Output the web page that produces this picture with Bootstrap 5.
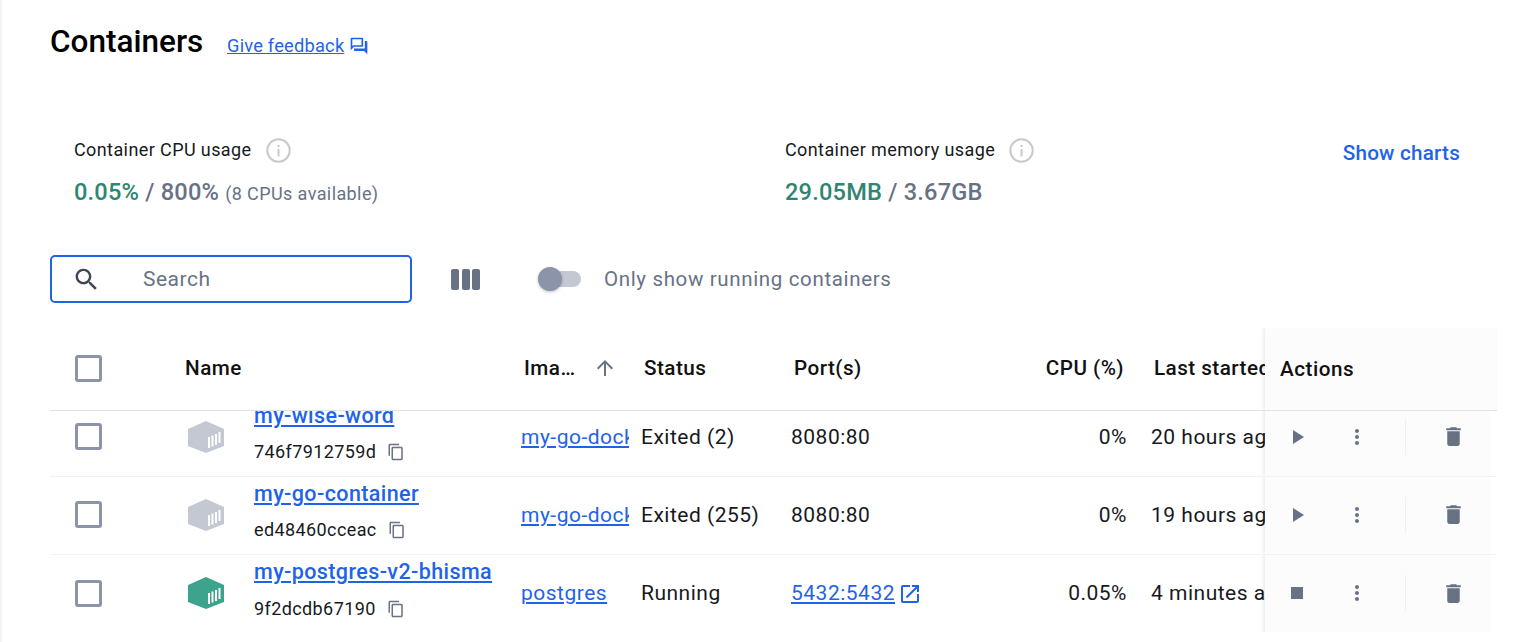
<!DOCTYPE html>
<html lang="en">
<head>
<meta charset="utf-8">
<title>Containers</title>
<link href="https://cdn.jsdelivr.net/npm/bootstrap@5.3.0/dist/css/bootstrap.min.css" rel="stylesheet">
<style>
:root{--ink:#17191d;--slate:#677285;--blue:#1f63e8;--mint:#2f8571;}
html,body{height:100%;overflow:hidden;background:#fff;}
body{font-family:Roboto,"Liberation Sans",sans-serif;color:var(--ink);border-left:2px solid #f2f3f4;font-size:21px;letter-spacing:.5px;line-height:1.2;}
a{color:var(--blue);}
svg{display:block;flex:none;fill:currentColor;}
.shell{padding:0 26px 0 48px;height:642px;}
.top-head{height:82px;padding-top:24px;align-items:flex-start;}
.top-head h1{font-size:31.5px;font-weight:500;color:#000;letter-spacing:0;margin:0;line-height:36px;width:177px;}
.fb-link{font-size:18.3px;letter-spacing:.2px;line-height:22px;margin-top:11px;}
.fb-ico{color:var(--blue);margin:12px 0 0 5px;}
.stats{height:173px;padding:56px 37px 0 24px;}
.stat-one{width:711px;}
.stat-lab{font-size:18px;line-height:24px;height:24px;letter-spacing:.4px;}
.info-ico{color:#c9c9c9;margin-left:14px;}
.stat-val{font-size:23.6px;font-weight:500;line-height:28px;margin-top:16px;color:var(--slate);letter-spacing:.2px;}
.stat-val b{font-weight:500;color:var(--mint);}
.stat-val small{font-size:18px;font-weight:400;letter-spacing:.4px;}
.show-link{font-size:20.7px;font-weight:500;text-decoration:none;letter-spacing:.2px;margin-top:3px;}
.tool-row{height:48px;}
.find-box{width:362px;height:48px;border:2px solid var(--blue);border-radius:5px;padding-left:22px;color:#3c4654;}
.find-box .form-control{border:0;box-shadow:none;padding:2px 0 0 42px;font-size:21px;letter-spacing:.5px;color:var(--slate);background:transparent;font-family:inherit;}
.find-box .form-control::placeholder{color:var(--slate);opacity:1;}
.find-box svg{margin-left:-2px;}
.col-bars{margin-left:39px;gap:2.5px;}
.col-bars i{display:block;width:8px;height:21px;border-radius:2px;background:var(--slate);}
.tgl{width:44px;height:25px;margin-left:58px;}
.tgl-track{width:43px;height:16px;border-radius:8px;background:#c4c8d4;}
.tgl-knob{width:24px;height:24px;border-radius:50%;background:#8b94a8;box-shadow:0 1px 3px rgba(0,0,0,.25);margin-left:-43px;}
.tgl-lab{color:var(--slate);margin-left:22px;letter-spacing:.65px;font-size:20.5px;}
.grid-wrap{margin-top:25px;width:1447px;}
.hrow{height:83px;border-bottom:1px solid #e1e2e6;font-weight:500;color:#111;padding-bottom:2px;font-size:20.7px;letter-spacing:.45px;}
.brow{height:78px;border-bottom:1px solid #f1f2f3;padding-bottom:2px;}
.brow:last-child{border-bottom:0;}
.rows-clip{height:221px;overflow:hidden;}
.rows-clip .brow:first-child{margin-top:-12px;}
.brow .c-img,.brow .c-stat,.brow .c-port,.brow .c-cpu,.brow .c-start{padding-top:2px;}
.c-check{width:135px;padding-left:25px;}
.c-check .form-check-input{width:27px;height:27px;margin:0;border:3px solid #8b94a8;border-radius:3px;background-color:#fff;}
.c-name{width:336px;}
.c-img{width:120px;padding-right:12px;}
.c-stat{width:150px;}
.c-port{width:200px;}
.c-cpu{width:136px;text-align:right;}
.c-start{width:138px;padding-left:24px;white-space:nowrap;overflow:hidden;}
.hrow .c-img{padding-left:3px;padding-right:0;}
.hrow .c-stat,.hrow .c-port{padding-left:3px;}
.hrow .c-start{padding-left:27px;}
.hrow .c-cpu{padding-right:3px;}
.c-act{background:#fcfcfd;box-shadow:-2px 0 3px rgba(0,0,0,.07);clip-path:inset(0 0 0 -6px);position:relative;width:225px;height:calc(100% + 2px);align-self:flex-start;letter-spacing:.5px;padding-bottom:2px;}
.hrow .c-act{width:232px;padding-left:15px;padding-bottom:0;}
.pod{width:36px;height:32px;margin:0 30px 0 3px;}
.pod-off{color:#c4c8d2;}
.pod-on{color:#3da38c;}
.pod rect{fill:#fff;}
.nm-block{padding-bottom:6px;}
.nm{font-weight:500;font-size:21.5px;line-height:24px;letter-spacing:.4px;}
.cid{font-size:18px;line-height:22px;letter-spacing:.4px;margin-top:12px;}
.cid svg{color:var(--slate);margin-left:11px;}
.clip-txt{display:block;overflow:hidden;white-space:nowrap;}
.ima-txt{width:57px;}
.sort-ico{color:var(--slate);margin-left:12px;}
.ext-ico{color:var(--blue);margin-left:3px;}
.act-ico{color:var(--slate);}
.act-one{width:40px;margin-left:20px;}
.act-two{width:40px;margin-left:20px;}
.act-sep{width:1px;height:36px;background:#eff0f2;margin-left:20px;}
.act-three{margin-left:35px;}
</style>
</head>
<body>
<main class="shell">
  <header class="d-flex top-head">
    <h1>Containers</h1>
    <a class="fb-link" href="#">Give feedback</a>
    <svg class="fb-ico" width="20" height="20" viewBox="0 0 24 24"><path d="M15 4v7H5.17L4 12.17V4h11m1-2H3c-.55 0-1 .45-1 1v14l4-4h10c.55 0 1-.45 1-1V3c0-.55-.45-1-1-1zm5 4h-2v9H6v2c0 .55.45 1 1 1h11l4 4V7c0-.55-.45-1-1-1z"/></svg>
  </header>

  <section class="d-flex stats">
    <div class="stat-one">
      <div class="d-flex align-items-center stat-lab">Container CPU usage
        <svg class="info-ico" width="25" height="25" viewBox="0 0 25 25"><circle cx="12.5" cy="12.5" r="11.2" fill="none" stroke="currentColor" stroke-width="2"/><rect x="11.5" y="11" width="2" height="7.5"/><rect x="11.5" y="7" width="2" height="2"/></svg>
      </div>
      <div class="stat-val"><b>0.05%</b> / 800% <small>(8 CPUs available)</small></div>
    </div>
    <div class="flex-grow-1">
      <div class="d-flex align-items-center stat-lab">Container memory usage
        <svg class="info-ico" width="25" height="25" viewBox="0 0 25 25"><circle cx="12.5" cy="12.5" r="11.2" fill="none" stroke="currentColor" stroke-width="2"/><rect x="11.5" y="11" width="2" height="7.5"/><rect x="11.5" y="7" width="2" height="2"/></svg>
      </div>
      <div class="stat-val"><b>29.05MB</b> / 3.67GB</div>
    </div>
    <a class="show-link" href="#">Show charts</a>
  </section>

  <section class="d-flex align-items-center tool-row">
    <div class="d-flex align-items-center find-box">
      <svg width="29" height="29" viewBox="0 0 24 24"><path d="M15.5 14h-.79l-.28-.27C15.41 12.59 16 11.11 16 9.5 16 5.91 13.09 3 9.5 3S3 5.91 3 9.5 5.91 16 9.5 16c1.61 0 3.09-.59 4.23-1.57l.27.28v.79l5 4.99L20.49 19l-4.99-5zm-6 0C7.01 14 5 11.99 5 9.5S7.01 5 9.5 5 14 7.01 14 9.5 11.99 14 9.5 14z"/></svg>
      <input class="form-control" type="text" placeholder="Search" aria-label="Search">
    </div>
    <div class="d-flex col-bars"><i></i><i></i><i></i></div>
    <div class="d-flex align-items-center tgl"><span class="tgl-track"></span><span class="tgl-knob"></span></div>
    <span class="tgl-lab">Only show running containers</span>
  </section>

  <section class="grid-wrap">
    <div class="d-flex align-items-center hrow">
      <div class="c-check"><input class="form-check-input" type="checkbox" aria-label="Select all"></div>
      <div class="c-name">Name</div>
      <div class="c-img d-flex align-items-center"><span class="ima-txt">Ima…</span><svg class="sort-ico" width="24" height="24" viewBox="0 0 24 24"><path d="M4 12l1.41 1.41L11 7.83V20h2V7.83l5.58 5.59L20 12l-8-8-8 8z"/></svg></div>
      <div class="c-stat">Status</div>
      <div class="c-port">Port(s)</div>
      <div class="c-cpu">CPU (%)</div>
      <div class="c-start">Last started</div>
      <div class="c-act d-flex align-items-center">Actions</div>
    </div>
    <div class="rows-clip">
      <div class="d-flex align-items-center brow">
        <div class="c-check"><input class="form-check-input" type="checkbox" aria-label="Select my-wise-word"></div>
        <div class="c-name d-flex align-items-center">
          <svg class="pod pod-off" viewBox="0 0 36 32"><path d="M18 0l18 8v17l-18 7-18-7V8z"/><rect x="20" y="16" width="2" height="11"/><rect x="23.5" y="14.5" width="2" height="11"/><rect x="27" y="13" width="2" height="11"/><rect x="30.5" y="11" width="2" height="11"/></svg>
          <div class="nm-block"><a class="nm" href="#">my-wise-word</a>
            <div class="d-flex align-items-center cid">746f7912759d<svg width="18" height="18" viewBox="0 0 24 24"><path d="M16 1H4c-1.1 0-2 .9-2 2v14h2V3h12V1zm3 4H8c-1.1 0-2 .9-2 2v14c0 1.1.9 2 2 2h11c1.1 0 2-.9 2-2V7c0-1.1-.9-2-2-2zm0 16H8V7h11v14z"/></svg></div>
          </div>
        </div>
        <div class="c-img"><a class="clip-txt" href="#">my-go-docker</a></div>
        <div class="c-stat">Exited (2)</div>
        <div class="c-port">8080:80</div>
        <div class="c-cpu">0%</div>
        <div class="c-start">20 hours ago</div>
        <div class="c-act d-flex align-items-center">
          <div class="act-one act-ico"><svg width="24" height="24" viewBox="0 0 24 24"><path d="M8 5v14l11-7z"/></svg></div>
          <div class="act-two act-ico"><svg width="24" height="24" viewBox="0 0 24 24"><path d="M12 8c1.1 0 2-.9 2-2s-.9-2-2-2-2 .9-2 2 .9 2 2 2zm0 2c-1.1 0-2 .9-2 2s.9 2 2 2 2-.9 2-2-.9-2-2-2zm0 6c-1.1 0-2 .9-2 2s.9 2 2 2 2-.9 2-2-.9-2-2-2z"/></svg></div>
          <span class="act-sep"></span>
          <div class="act-three act-ico"><svg width="25" height="25" viewBox="0 0 24 24"><path d="M6 19c0 1.1.9 2 2 2h8c1.1 0 2-.9 2-2V7H6v12zM19 4h-3.5l-1-1h-5l-1 1H5v2h14V4z"/></svg></div>
        </div>
      </div>
      <div class="d-flex align-items-center brow">
        <div class="c-check"><input class="form-check-input" type="checkbox" aria-label="Select my-go-container"></div>
        <div class="c-name d-flex align-items-center">
          <svg class="pod pod-off" viewBox="0 0 36 32"><path d="M18 0l18 8v17l-18 7-18-7V8z"/><rect x="20" y="16" width="2" height="11"/><rect x="23.5" y="14.5" width="2" height="11"/><rect x="27" y="13" width="2" height="11"/><rect x="30.5" y="11" width="2" height="11"/></svg>
          <div class="nm-block"><a class="nm" href="#">my-go-container</a>
            <div class="d-flex align-items-center cid">ed48460cceac<svg width="18" height="18" viewBox="0 0 24 24"><path d="M16 1H4c-1.1 0-2 .9-2 2v14h2V3h12V1zm3 4H8c-1.1 0-2 .9-2 2v14c0 1.1.9 2 2 2h11c1.1 0 2-.9 2-2V7c0-1.1-.9-2-2-2zm0 16H8V7h11v14z"/></svg></div>
          </div>
        </div>
        <div class="c-img"><a class="clip-txt" href="#">my-go-docker</a></div>
        <div class="c-stat">Exited (255)</div>
        <div class="c-port">8080:80</div>
        <div class="c-cpu">0%</div>
        <div class="c-start">19 hours ago</div>
        <div class="c-act d-flex align-items-center">
          <div class="act-one act-ico"><svg width="24" height="24" viewBox="0 0 24 24"><path d="M8 5v14l11-7z"/></svg></div>
          <div class="act-two act-ico"><svg width="24" height="24" viewBox="0 0 24 24"><path d="M12 8c1.1 0 2-.9 2-2s-.9-2-2-2-2 .9-2 2 .9 2 2 2zm0 2c-1.1 0-2 .9-2 2s.9 2 2 2 2-.9 2-2-.9-2-2-2zm0 6c-1.1 0-2 .9-2 2s.9 2 2 2 2-.9 2-2-.9-2-2-2z"/></svg></div>
          <span class="act-sep"></span>
          <div class="act-three act-ico"><svg width="25" height="25" viewBox="0 0 24 24"><path d="M6 19c0 1.1.9 2 2 2h8c1.1 0 2-.9 2-2V7H6v12zM19 4h-3.5l-1-1h-5l-1 1H5v2h14V4z"/></svg></div>
        </div>
      </div>
      <div class="d-flex align-items-center brow">
        <div class="c-check"><input class="form-check-input" type="checkbox" aria-label="Select my-postgres-v2-bhisma"></div>
        <div class="c-name d-flex align-items-center">
          <svg class="pod pod-on" viewBox="0 0 36 32"><path d="M18 0l18 8v17l-18 7-18-7V8z"/><rect x="20" y="16" width="2" height="11"/><rect x="23.5" y="14.5" width="2" height="11"/><rect x="27" y="13" width="2" height="11"/><rect x="30.5" y="11" width="2" height="11"/></svg>
          <div class="nm-block"><a class="nm" href="#">my-postgres-v2-bhisma</a>
            <div class="d-flex align-items-center cid">9f2dcdb67190<svg width="18" height="18" viewBox="0 0 24 24"><path d="M16 1H4c-1.1 0-2 .9-2 2v14h2V3h12V1zm3 4H8c-1.1 0-2 .9-2 2v14c0 1.1.9 2 2 2h11c1.1 0 2-.9 2-2V7c0-1.1-.9-2-2-2zm0 16H8V7h11v14z"/></svg></div>
          </div>
        </div>
        <div class="c-img"><a class="clip-txt" href="#">postgres</a></div>
        <div class="c-stat">Running</div>
        <div class="c-port d-flex align-items-center"><a href="#">5432:5432</a><svg class="ext-ico" width="24" height="24" viewBox="0 0 24 24"><path d="M19 19H5V5h7V3H5c-1.11 0-2 .9-2 2v14c0 1.1.89 2 2 2h14c1.1 0 2-.9 2-2v-7h-2v7zM14 3v2h3.59l-9.83 9.83 1.41 1.41L19 6.41V10h2V3h-7z"/></svg></div>
        <div class="c-cpu">0.05%</div>
        <div class="c-start">4 minutes ago</div>
        <div class="c-act d-flex align-items-center">
          <div class="act-one act-ico"><svg width="24" height="24" viewBox="0 0 24 24"><path d="M6 6h12v12H6z"/></svg></div>
          <div class="act-two act-ico"><svg width="24" height="24" viewBox="0 0 24 24"><path d="M12 8c1.1 0 2-.9 2-2s-.9-2-2-2-2 .9-2 2 .9 2 2 2zm0 2c-1.1 0-2 .9-2 2s.9 2 2 2 2-.9 2-2-.9-2-2-2zm0 6c-1.1 0-2 .9-2 2s.9 2 2 2 2-.9 2-2-.9-2-2-2z"/></svg></div>
          <span class="act-sep"></span>
          <div class="act-three act-ico"><svg width="25" height="25" viewBox="0 0 24 24"><path d="M6 19c0 1.1.9 2 2 2h8c1.1 0 2-.9 2-2V7H6v12zM19 4h-3.5l-1-1h-5l-1 1H5v2h14V4z"/></svg></div>
        </div>
      </div>
    </div>
  </section>
</main>
</body>
</html>
